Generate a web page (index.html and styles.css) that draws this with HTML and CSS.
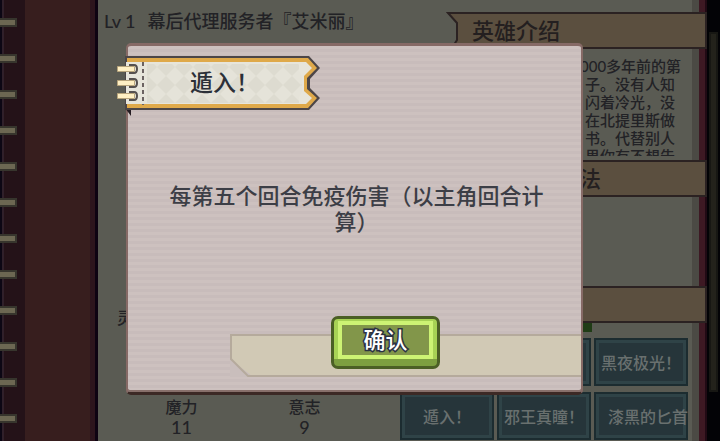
FILE: index.html
```html
<!DOCTYPE html>
<html lang="zh-CN">
<head>
<meta charset="utf-8">
<title>英雄介绍</title>
<link rel="stylesheet" href="styles.css">
</head>
<body>
<div class="book">
  <div class="cover">
    <div class="rings">
      <i></i><i></i><i></i><i></i><i></i><i></i><i></i><i></i><i></i><i></i><i></i><i></i>
    </div>
  </div>
  <main class="page">
    <section class="hero">
      <h1 class="hero-name"><span>Lv 1</span><span>幕后代理服务者『艾米丽』</span></h1>
      <div class="hero-stats">
        <p class="stat-side">灵</p>
        <dl class="stats">
          <div><dt>魔力</dt><dd>11</dd></div>
          <div><dt>意志</dt><dd>9</dd></div>
        </dl>
      </div>
    </section>
    <section class="info">
      <h2 class="banner banner-first">
        <svg class="notch" width="14" height="37" viewBox="0 0 14 37" aria-hidden="true">
          <path d="M14 1H1l10 10v17l-5 8h8z" fill="#5b4f3f"/>
          <path d="M14 1H2l9 10v17l-5 8h8" fill="none" stroke="#2b2222" stroke-width="2"/>
        </svg>
        <span>英雄介绍</span>
      </h2>
      <p class="bio">000多年前的第<br>子。没有人知<br>闪着冷光，没<br>在北提里斯做<br>书。代替别人<br>果你有不想告</p>
      <h2 class="banner banner-mid"><span>法</span></h2>
      <div class="blank"></div>
      <h2 class="banner"></h2>
      <div class="marker"></div>
      <div class="skills">
        <span class="spacer"></span>
        <button type="button" class="skill" aria-label="技能"></button>
        <button type="button" class="skill">黑夜极光！</button>
        <button type="button" class="skill">遁入！</button>
        <button type="button" class="skill">邪王真瞳！</button>
        <button type="button" class="skill skill-long">漆黑的匕首</button>
      </div>
    </section>
  </main>
  <div class="edge"><div class="rail"></div></div>
</div>

<div class="overlay">
  <div class="dialog" role="dialog" aria-labelledby="dialog-title">
    <header class="ribbon">
      <svg class="ribbon-art" width="203" height="62" viewBox="0 0 203 62" aria-hidden="true">
        <defs>
          <pattern id="check" width="18" height="18" patternUnits="userSpaceOnUse" x="4" y="2">
            <rect width="18" height="18" fill="#e5e3d9"/>
            <path d="M9 0l9 9-9 9-9-9z" fill="#dddbd0"/>
          </pattern>
        </defs>
        <path d="M8 52h6v8z" fill="#241d22"/>
        <path d="M8 0h184l11 12-10 11v9l10 10-11 12H8z" fill="#4c4648"/>
        <path d="M10 2h181l9 10-10 10v11l10 9-9 10H10z" fill="#dfa94a"/>
        <path d="M9 6h180l6 6-8 8v15l8 7-6 6H9z" fill="#e7e5db"/>
        <path d="M30 8h152v6l3 6v15l-3 6v6H30z" fill="url(#check)"/>
        <path d="M26 6v43" stroke="#6b6262" stroke-width="2" stroke-dasharray="4 3"/>
        <g fill="none" stroke="#55504f" stroke-width="2">
          <path d="M12 9h5q3 0 3 4t-3 4h-5M12 23h5q3 0 3 4t-3 4h-5M12 36h5q3 0 3 4t-3 4h-5"/>
        </g>
        <g fill="#fff0c4" stroke="#b8a57c" stroke-width="1">
          <path d="M.5 10.500h17v5H.5zM.5 24.500h17v5H.5zM.5 37.500h17v5H.5z"/>
        </g>
      </svg>
      <h2 class="ribbon-title" id="dialog-title">遁入！</h2>
    </header>
    <p class="message">每第五个回合免疫伤害（以主角回合计算）</p>
    <footer class="actions">
      <svg class="band" aria-hidden="true">
        <rect x="1" y="1" width="120%" height="41" fill="#d1c9b5" stroke="#b5aa9c" stroke-width="2"/>
      </svg>
      <svg class="band-corner" width="22" height="22" viewBox="0 0 22 22" aria-hidden="true">
        <path d="M0 4v18h22v-1z" fill="#c9bebc"/>
        <path d="M1 0v4l17 17h4" fill="none" stroke="#b5aa9c" stroke-width="2"/>
      </svg>
      <button type="button" class="confirm"><span>确认</span></button>
    </footer>
  </div>
</div>
</body>
</html>
```

FILE: styles.css
```css
* {
  box-sizing: border-box;
}

body,
h1,
h2,
p,
dl,
dd {
  margin: 0;
}

body {
  position: relative;
  overflow: hidden;
  background: #5a5b53;
  color: #222226;
  font-family: "Lato", "Noto Sans CJK SC", sans-serif;
  font-weight: 500;
}

h1,
h2 {
  font-weight: 500;
}

button {
  font-family: inherit;
  font-weight: inherit;
}

.book {
  display: flex;
  height: 100vh;
}

.cover {
  flex: none;
  width: 98px;
  overflow: hidden;
  background: linear-gradient(90deg, #0c0714 0 2px, #30202a 2px 4px, #241218 4px 25px, #371e1e 25px 90px, #2d151d 90px 95px, #0e0312 95px 98px);
}

.rings {
  display: flex;
  flex-direction: column;
  gap: 27px;
  padding-top: 18px;
}

.rings i {
  flex: none;
  width: 17px;
  height: 9px;
  border: 2px solid #37352d;
  border-left: 0;
  background: #6c6752;
}

.page {
  flex: 1;
  display: flex;
  min-width: 0;
}

.hero {
  flex: 1;
  display: flex;
  flex-direction: column;
  justify-content: space-between;
  min-width: 0;
  padding: 8px 0 4px 6px;
}

.hero-name {
  display: flex;
  gap: 12px;
  font-size: 18px;
  line-height: 26px;
  white-space: nowrap;
}

.stat-side {
  padding: 0 0 69px 13px;
  font-size: 16px;
  line-height: 20px;
}

.stats {
  display: flex;
  gap: 42px;
  padding-left: 37px;
  text-align: center;
}

.stats div {
  width: 81px;
}

.stats dt {
  font-size: 16px;
  line-height: 20px;
}

.stats dd {
  font-size: 18px;
  line-height: 20px;
}

.info {
  flex: none;
  width: 307px;
  padding-top: 12px;
  background: linear-gradient(90deg, #5a5b53 0 292px, #4b4a44 292px 299px, #3d1923 299px 305px, #200a14 305px);
}

.banner {
  position: relative;
  height: 37px;
  margin-left: 60px;
  padding-left: 12px;
  border: 2px solid #2b2222;
  border-left: 0;
  background: #5b4f3f;
  color: #241f20;
  font-size: 22px;
  line-height: 33px;
}

.notch {
  position: absolute;
  top: -2px;
  left: -14px;
}

.banner-mid {
  padding-left: 119px;
}

.bio {
  height: 99px;
  margin: 8px 0 4px 175px;
  padding-left: 10px;
  overflow: hidden;
  font-size: 15px;
  line-height: 18px;
  text-indent: -5px;
  white-space: nowrap;
}

.blank {
  height: 89px;
}

.marker {
  width: 13px;
  height: 9px;
  margin-left: 179px;
  background: #203c16;
}

.skills {
  display: grid;
  grid-template-columns: repeat(3, 94px);
  grid-auto-rows: 48px;
  gap: 6px 3px;
  padding-top: 6px;
}

.skill {
  padding: 0;
  border: 2px solid #1c2c30;
  background: #26353a;
  box-shadow: inset 0 0 0 3px #2f4347;
  color: #69706f;
  font-size: 16px;
  white-space: nowrap;
}

.skill-long {
  padding-left: 12px;
}

.edge {
  flex: none;
  width: 13px;
  padding: 32px 2px 49px;
  background: #030306;
}

.rail {
  height: 360px;
  border: 2px solid #171713;
  background: #23221b;
}

.overlay {
  position: absolute;
  inset: 0;
  display: flex;
  padding: 43px 137px 46px 126px;
}

.dialog {
  flex: 1;
  display: flex;
  flex-direction: column;
  min-width: 0;
  border: 2px solid #866a66;
  border-top-width: 3px;
  border-bottom: 3px solid #3c2925;
  border-radius: 5px;
  background: repeating-linear-gradient(180deg, #cdc1bf 0 3px, #c8bcbb 3px 6px);
  box-shadow: inset 0 -2px #88706b;
}

.ribbon {
  display: grid;
  width: 203px;
  height: 62px;
  margin: 10px 0 0 -11px;
}

.ribbon-art,
.ribbon-title {
  grid-area: 1 / 1;
}

.ribbon-title {
  padding-left: 12px;
  color: #2c3038;
  font-size: 23px;
  line-height: 52px;
  text-align: center;
}

.message {
  flex: 1;
  padding: 65px 34px 0 38px;
  color: #3c3e46;
  font-size: 22px;
  line-height: 26px;
  text-align: center;
}

.actions {
  display: grid;
  grid-template-columns: 102px 1fr;
  padding-bottom: 15px;
}

.band {
  grid-area: 1 / 2;
  width: 100%;
  height: 43px;
  margin-top: 18px;
}

.band-corner {
  grid-area: 1 / 2;
  align-self: end;
}

.confirm {
  grid-area: 1 / 1 / 2 / 3;
  justify-self: center;
  width: 109px;
  height: 53px;
  margin-left: 62px;
  padding: 2px 4px 7px;
  border: 3px solid #4b5f25;
  border-radius: 7px;
  background: linear-gradient(180deg, #a7d255 0 40px, #7d9f40 40px);
}

.confirm span {
  display: block;
  height: 38px;
  border: 4px solid #cdf374;
  background: #82964a;
  color: #fff;
  font-size: 22px;
  line-height: 30px;
  paint-order: stroke fill;
  -webkit-text-stroke: 3px #2b3143;
}
```
